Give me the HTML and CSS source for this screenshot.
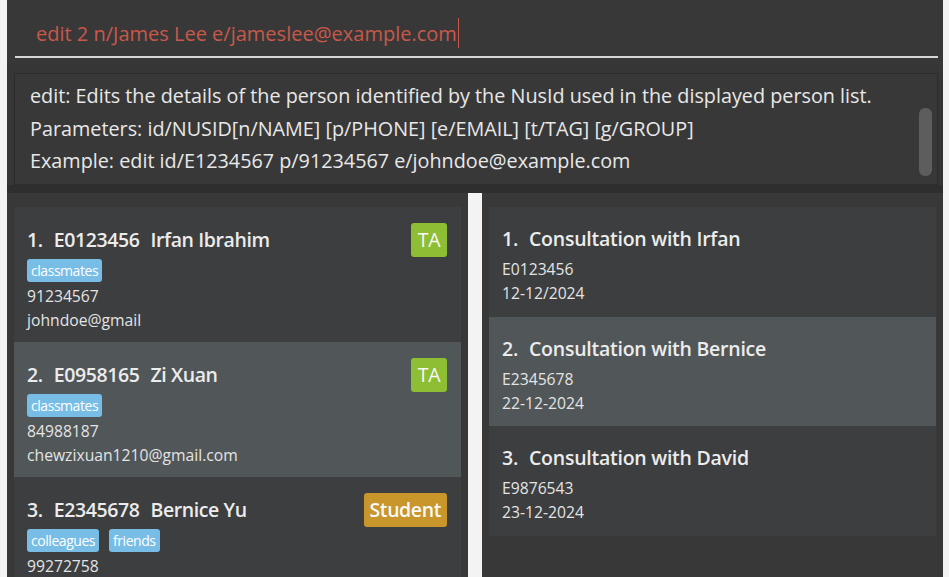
FILE: index.html
```html
<!DOCTYPE html>
<html>
<head>
<meta charset="utf-8">
<link rel="stylesheet" href="styles.css">
</head>
<body>
<div class="app">
  <div class="command">
    <div class="command-field"><span class="command-text">edit 2 n/James Lee e/jameslee@example.com</span><span class="caret"></span></div>
  </div>
  <div class="result-pane">
    <div class="result-box">
      <div class="result-text">
        <div>edit: Edits the details of the person identified by the NusId used in the displayed person list.</div>
        <div>Parameters: id/NUSID[n/NAME] [p/PHONE] [e/EMAIL] [t/TAG] [g/GROUP]</div>
        <div>Example: edit id/E1234567 p/91234567 e/johndoe@example.com</div>
      </div>
      <div class="scrollbar"><div class="thumb"></div></div>
    </div>
  </div>
  <div class="band"></div>
  <div class="lists">
    <div class="panel">
      <div class="person card">
        <div class="row">
          <div class="title"><span>1.</span><span>E0123456</span><span>Irfan Ibrahim</span></div>
          <span class="badge ta">TA</span>
        </div>
        <div class="tags"><span class="tag">classmates</span></div>
        <div class="detail">91234567</div>
        <div class="detail">johndoe@gmail</div>
      </div>
      <div class="person card alt">
        <div class="row">
          <div class="title"><span>2.</span><span>E0958165</span><span>Zi Xuan</span></div>
          <span class="badge ta">TA</span>
        </div>
        <div class="tags"><span class="tag">classmates</span></div>
        <div class="detail">84988187</div>
        <div class="detail">chewzixuan1210@gmail.com</div>
      </div>
      <div class="person card">
        <div class="row">
          <div class="title"><span>3.</span><span>E2345678</span><span>Bernice Yu</span></div>
          <span class="badge student">Student</span>
        </div>
        <div class="tags"><span class="tag">colleagues</span><span class="tag">friends</span></div>
        <div class="detail">99272758</div>
      </div>
    </div>
    <div class="divider"></div>
    <div class="panel">
      <div class="consult card">
        <div class="title"><span>1.</span><span>Consultation with Irfan</span></div>
        <div class="detail">E0123456</div>
        <div class="detail">12-12/2024</div>
      </div>
      <div class="consult card alt">
        <div class="title"><span>2.</span><span>Consultation with Bernice</span></div>
        <div class="detail">E2345678</div>
        <div class="detail">22-12-2024</div>
      </div>
      <div class="consult card">
        <div class="title"><span>3.</span><span>Consultation with David</span></div>
        <div class="detail">E9876543</div>
        <div class="detail">23-12-2024</div>
      </div>
    </div>
  </div>
</div>
</body>
</html>
```

FILE: styles.css
```css
html, body {
  margin: 0;
  padding: 0;
  background: #f3f3f3;
  height: 577px;
  overflow: hidden;
}
body {
  font-family: "Open Sans", "Noto Sans", sans-serif;
}
.app {
  margin-left: 7px;
  width: 936px;
  height: 577px;
  background: #383838;
  display: flex;
  flex-direction: column;
  overflow: hidden;
}
.command {
  flex: 0 0 64px;
  padding: 0 5px 0 8px;
  box-sizing: border-box;
  background: #383838;
}
.command-field {
  height: 58px;
  border-bottom: 2px solid #d6d6d6;
  box-sizing: border-box;
  display: flex;
  align-items: center;
  padding-left: 21px;
  padding-top: 10px;
}
.command-text {
  color: #c8584a;
  font-size: 20px;
}
.caret {
  display: inline-block;
  width: 1px;
  height: 30px;
  background: #c8584a;
  margin-left: 1px;
}
.result-pane {
  flex: 0 0 121px;
  background: #363636;
  padding: 9px 5px 0 7px;
  box-sizing: border-box;
}
.result-box {
  height: 112px;
  border: 1px solid #2c2c2c;
  background: #383838;
  box-sizing: border-box;
  display: flex;
}
.result-text {
  flex: 1;
  padding: 6px 0 0 15px;
  color: #e8e8e8;
  font-size: 19.8px;
  line-height: 32.5px;
  white-space: nowrap;
}
.scrollbar {
  width: 18px;
  padding-top: 34px;
}
.thumb {
  width: 13px;
  height: 68px;
  border-radius: 6px;
  background: #5d5d5d;
}
.band {
  flex: 0 0 8px;
  background: #2e2e2e;
}
.lists {
  flex: 1 1 auto;
  min-height: 0;
  display: flex;
}
.panel {
  flex: 1;
  padding: 14px 7px 0 7px;
  background: #383838;
}
.divider {
  width: 14px;
  background: #f3f3f3;
}
.card {
  background: #3c3e3f;
  padding: 0 14px 0 13px;
  box-sizing: border-box;
  color: #ececec;
}
.card.alt {
  background: #515658;
}
.person {
  height: 135px;
  padding-top: 16px;
}
.consult {
  height: 109.5px;
  padding-top: 15px;
}
.row {
  display: flex;
  justify-content: space-between;
  align-items: flex-start;
}
.title {
  display: flex;
  gap: 11px;
  font-size: 19.5px;
  font-weight: 600;
  letter-spacing: -0.4px;
  line-height: 34px;
  color: #ececec;
}
.consult .title {
  letter-spacing: -0.25px;
  margin-bottom: 1px;
}
.badge {
  height: 34px;
  line-height: 34px;
  padding: 0 6px;
  border-radius: 3px;
  color: #f8f8f8;
  font-size: 19.5px;
  font-weight: 600;
  letter-spacing: -0.4px;
}
.badge.ta {
  background: #8dbe33;
  width: 36px;
  padding: 0;
  text-align: center;
  font-weight: 500;
}
.badge.student {
  background: #c8962a;
}
.tags {
  display: flex;
  gap: 10px;
  margin-top: 2px;
}
.tag {
  height: 23px;
  line-height: 23px;
  padding: 0 4px;
  border-radius: 3px;
  background: #78bde6;
  color: #ffffff;
  font-size: 14px;
  font-weight: 500;
  letter-spacing: -0.45px;
}
.detail {
  font-size: 15.7px;
  line-height: 24px;
  color: #e4e4e4;
}
.person .tags + .detail {
  margin-top: 2px;
}
```
